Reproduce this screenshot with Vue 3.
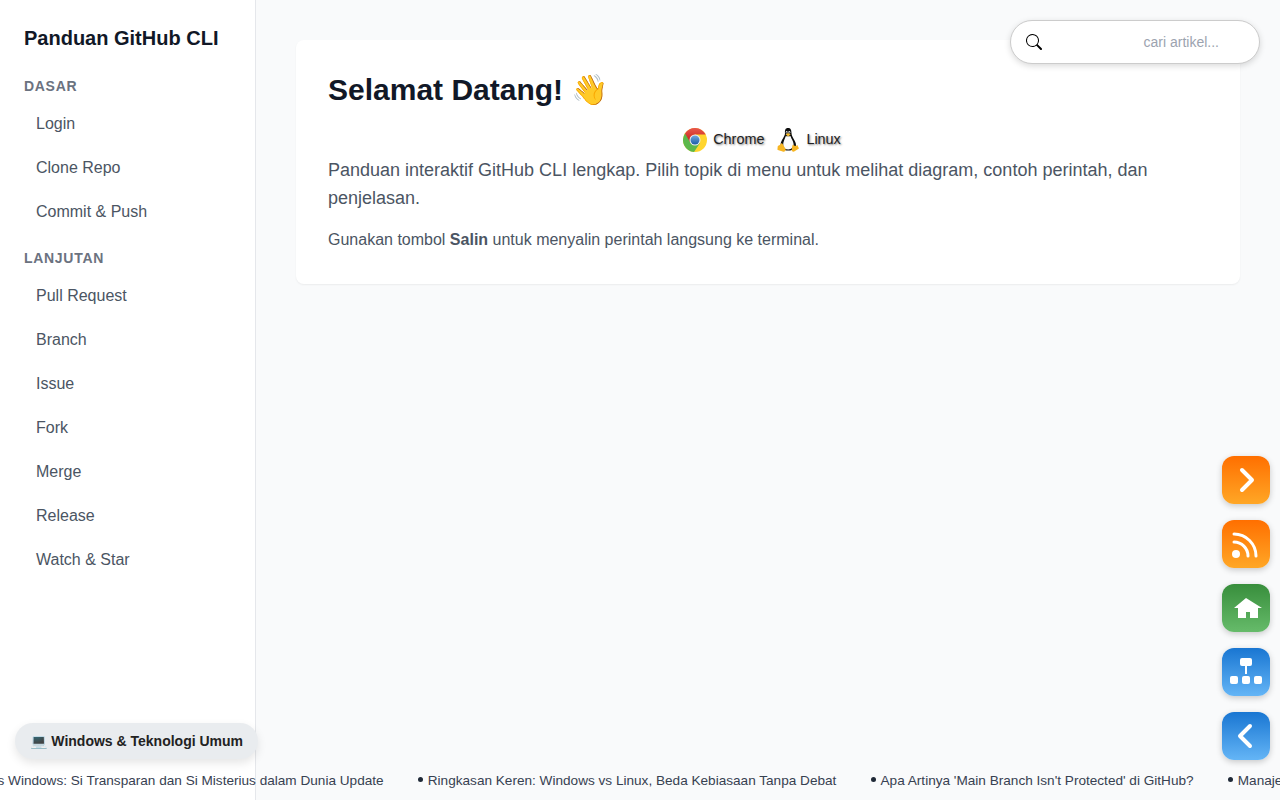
<script setup>
const groups = [
  { title: 'Dasar', items: ['Login', 'Clone Repo', 'Commit & Push'] },
  { title: 'Lanjutan', items: ['Pull Request', 'Branch', 'Issue', 'Fork', 'Merge', 'Release', 'Watch & Star'] },
]
const news = [
  'Ringkasan Keren: Windows vs Linux, Beda Kebiasaan Tanpa Debat',
  "Apa Artinya 'Main Branch Isn't Protected' di GitHub?",
  'Manajemen',
]
</script>

<template>
  <div class="page">
    <aside class="sidebar">
      <h2>Panduan GitHub CLI</h2>
      <nav>
        <section v-for="g in groups" :key="g.title">
          <h3>{{ g.title }}</h3>
          <a v-for="i in g.items" :key="i">{{ i }}</a>
        </section>
      </nav>
    </aside>
    <main>
      <article class="card">
        <h1>Selamat Datang! <span class="wave">👋</span></h1>
        <div class="agents">
          <span class="agent">
            <svg width="24" height="24" viewBox="0 0 24 24">
              <defs>
                <linearGradient id="cr" x2="0" y2="1"><stop stop-color="#e8584c" /><stop offset="1" stop-color="#c6211a" /></linearGradient>
                <linearGradient id="cb" x2="0" y2="1"><stop stop-color="#6fa8e0" /><stop offset="1" stop-color="#1a5ca8" /></linearGradient>
              </defs>
              <circle cx="12" cy="12" r="12" fill="#ffd52e" />
              <path d="M12 12 2 5.4A12 12 0 0 0 11 24L17 15Z" fill="#5cb84c" />
              <path d="M12 6.5H22.7A12 12 0 0 0 2 5.4L7 14Z" fill="url(#cr)" />
              <circle cx="12" cy="12" r="5.5" fill="#f0f0f0" />
              <circle cx="12" cy="12" r="4.5" fill="url(#cb)" />
            </svg>
            <span class="label">Chrome</span>
          </span>
          <span class="agent">
            <svg width="24" height="24" viewBox="0 0 24 24">
              <path d="M12 0C9.2 0 8.8 2.2 9 5C9.2 8 5.2 12 4.6 16C4 20 7 22.5 12.3 22.5S20.8 20 19.8 15.5C18.8 11.5 15.6 8.8 15.5 5C15.4 2 14.8 0 12 0Z" fill="#0c0c0c" />
              <path d="M9.7 8.3C9 11 6.8 14 7.2 17.8C7.5 20.2 9.2 21.4 12.4 21.4S17.8 19 17.6 16C17.4 12.5 14.9 10.5 14.7 8.2Z" fill="#fafafa" />
              <ellipse cx="10.7" cy="4.3" rx=".9" ry="1.2" fill="#ddd" />
              <ellipse cx="13.3" cy="4.3" rx="1" ry="1.2" fill="#ddd" />
              <circle cx="10.9" cy="4.6" r=".5" /><circle cx="13.1" cy="4.6" r=".5" />
              <path d="M9.6 6.4 12 5.1 14.7 6.5 12.1 8.6Z" fill="#f0b72c" />
              <path d="M5.3 15.2C4.3 15.9 4 17.4 2.2 17.8C1.3 18.2 1.9 19.8 1.4 21.2C1.1 22.8 5 22.7 6.6 23.6C8.5 24.4 10.3 22.8 9.4 20.8L7 16.4C6.5 15.5 5.9 15 5.3 15.2Z" fill="#f7b522" />
              <path d="M17 16.6C16 17.8 16.2 20 15.7 22C15.6 23.8 17.7 24.1 19 23L22.6 20.7C23.4 20 22 19 21.3 17C20 18.4 18 18.2 17 16.6Z" fill="#f7b522" />
            </svg>
            <span class="label">Linux</span>
          </span>
        </div>
        <p class="lead">Panduan interaktif GitHub CLI lengkap. Pilih topik di menu untuk melihat diagram, contoh perintah, dan penjelasan.</p>
        <p class="hint">Gunakan tombol <strong>Salin</strong> untuk menyalin perintah langsung ke terminal.</p>
      </article>
    </main>

    <label class="search">
      <svg width="16" height="16" viewBox="0 0 16 16"><path fill="#000" d="M11.742 10.344a6.5 6.5 0 1 0-1.397 1.398h-.001q.044.06.098.115l3.85 3.85a1 1 0 0 0 1.415-1.414l-3.85-3.85a1 1 0 0 0-.115-.1zM12 6.5a5.5 5.5 0 1 1-11 0 5.5 5.5 0 0 1 11 0" /></svg>
      <span>cari artikel...</span>
    </label>

    <div class="rail">
      <button class="orange"><svg viewBox="0 0 48 48"><path class="line" d="M20 14 30 24 20 34" /></svg></button>
      <button class="orange">
        <svg viewBox="0 0 48 48"><circle cx="14" cy="34" r="4" fill="#fff" /><path class="line thin" d="M12 22A14 14 0 0 1 26 36M12 14A22 22 0 0 1 34 36" /></svg>
      </button>
      <button class="green"><svg viewBox="0 0 48 48"><path fill="#fff" d="M24 14 40 24H36V34H28V28H24V34H16V24H12Z" /></svg></button>
      <button class="blue">
        <svg viewBox="0 0 48 48" fill="#fff"><rect x="18" y="10" width="12" height="8" rx="2" /><rect x="23" y="18" width="2" height="8" /><rect x="8" y="28" width="8" height="8" rx="2" /><rect x="20" y="28" width="8" height="8" rx="2" /><rect x="32" y="28" width="8" height="8" rx="2" /></svg>
      </button>
      <button class="blue"><svg viewBox="0 0 48 48"><path class="line" d="M28 14 18 24 28 34" /></svg></button>
    </div>

    <div class="category"><span class="pc">💻</span> Windows &amp; Teknologi Umum</div>
    <div class="ticker">
      <span class="first">s Windows: Si Transparan dan Si Misterius dalam Dunia Update</span>
      <span v-for="n in news" :key="n" class="news"><i></i>{{ n }}</span>
    </div>
  </div>
</template>

<style>
body { margin: 0; overflow: hidden; }
</style>
<style scoped>
* { box-sizing: border-box; }
.page { position: relative; display: flex; height: 800px; overflow: hidden; background: #f9fafb; color: #1f2937; font: 16px/24px "Liberation Sans", Arial, sans-serif; }
h1, h2, h3, p { margin: 0; }
.sidebar { flex: 0 0 256px; padding: 24px; background: #fff; border-right: 1px solid #e5e7eb; }
h2 { font-size: 20px; line-height: 28px; color: #111827; margin-bottom: 24px; }
section { margin-bottom: 16px; }
h3 { font-size: 14px; line-height: 20px; letter-spacing: .7px; text-transform: uppercase; color: #6b7280; margin-bottom: 8px; }
section a { display: block; padding: 8px 12px; margin-bottom: 4px; color: #4b5563; }
section a:last-child { margin-bottom: 0; }
main { flex: 1; padding: 40px; }
.card { padding: 32px; border-radius: 8px; background: #fff; box-shadow: 0 1px 2px rgba(0, 0, 0, .06); color: #4b5563; }
h1 { font-size: 30px; line-height: 36px; color: #111827; margin-bottom: 16px; }
.wave, .pc { font-family: "Noto Color Emoji", sans-serif; }
.agents { display: flex; justify-content: center; gap: 12px; height: 32px; align-items: center; margin-right: 12px; }
.agent { display: flex; align-items: center; gap: 6px; font-size: 14.4px; color: #222; text-shadow: 1px 1px 2px rgba(0, 0, 0, .5); }
.label { padding-bottom: 2px; }
.lead { font-size: 18px; line-height: 28px; margin-bottom: 16px; }
.search { position: absolute; left: 1010px; top: 20px; width: 250px; height: 44px; display: flex; align-items: center; justify-content: space-between; padding: 0 40px 0 15px; border: 1px solid #ccc; border-radius: 22px; background: #fff; box-shadow: 0 2px 6px rgba(0, 0, 0, .15); font-size: 14px; color: #9ca3af; }
.rail { position: absolute; right: 10px; top: 456px; display: flex; flex-direction: column; gap: 16px; }
.rail button { width: 48px; height: 48px; padding: 0; border: 0; border-radius: 12px; box-shadow: 0 2px 6px rgba(0, 0, 0, .2); }
.rail svg { display: block; width: 48px; height: 48px; }
.orange { background: linear-gradient(#ff6f00, #ffa726); }
.green { background: linear-gradient(#388e3c, #66bb6a); }
.blue { background: linear-gradient(#1976d2, #64b5f6); }
.line { fill: none; stroke: #fff; stroke-width: 4; stroke-linecap: round; stroke-linejoin: round; }
.thin { stroke-width: 3; }
.category { position: absolute; left: 15px; top: 723px; height: 36px; padding: 0 15px; border-radius: 18px; background: #e9ecef; box-shadow: 0 4px 10px rgba(0, 0, 0, .1); font-size: 14px; line-height: 36px; font-weight: 700; color: #222; white-space: nowrap; }
.ticker { position: absolute; left: 0; right: 0; bottom: 0; height: 39px; display: flex; overflow: hidden; font-size: 13.6px; line-height: 40px; color: #374151; white-space: nowrap; }
.first { margin-left: -2.5px; }
.news { display: flex; align-items: center; margin-left: 34.5px; }
.news i { width: 5px; height: 5px; margin: 0 4.7px 3px 0; border-radius: 50%; background: #1f2937; }
</style>
